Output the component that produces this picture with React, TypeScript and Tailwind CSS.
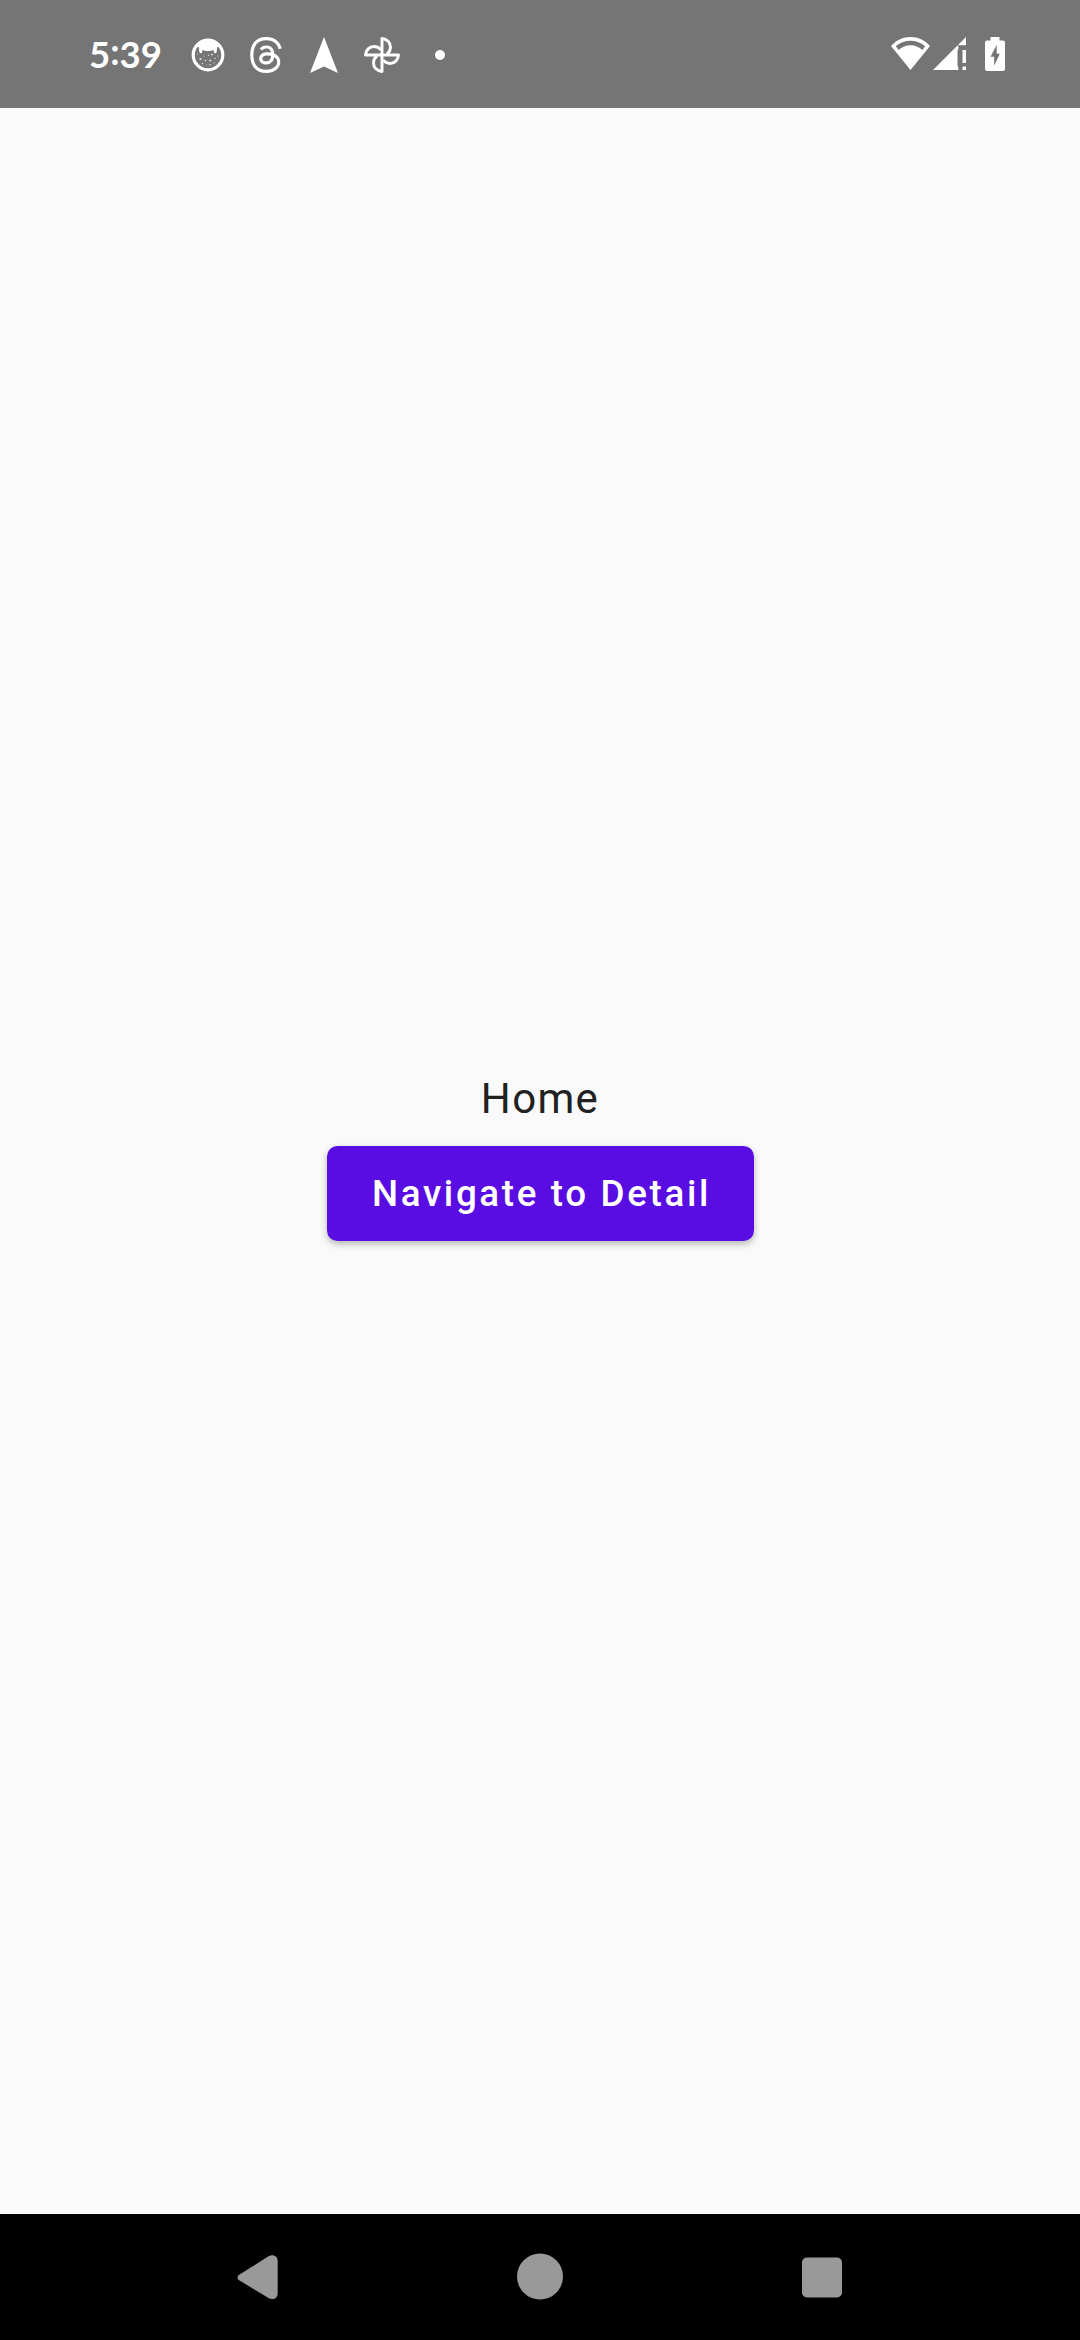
import React from "react";
import { SiThreads } from "react-icons/si";

function CatIcon() {
  return (
    <svg className="h-[36px] w-[36px]" viewBox="0 0 36 36">
      <circle cx="18" cy="18" r="14.800" fill="none" stroke="#fff" strokeWidth="3.200" />
      <path
        fill="#fff"
        d="M6.500 9.500C9 4.500 14 3 18 3s9 1.500 11.500 6.500l-2.700 1c.4 2 .2 4-.9 5.800l-1.600-.3-1-3.200c-1.500 1-3 1.300-5.300 1.300s-3.800-.3-5.300-1.300l-1 3.200-1.600.3c-1.100-1.800-1.300-3.800-.9-5.800z"
      />
      <g fill="#fff" opacity=".8">
        <circle cx="7.500" cy="17" r=".6" />
        <circle cx="10.500" cy="22" r="1.100" />
        <circle cx="14" cy="19" r=".6" />
        <circle cx="18.500" cy="18.300" r=".7" />
        <circle cx="22" cy="17.500" r=".9" />
        <circle cx="15.500" cy="23.500" r=".8" />
        <circle cx="20.300" cy="23.500" r="1.100" />
        <circle cx="25" cy="21.500" r=".7" />
        <circle cx="28" cy="19" r=".6" />
        <circle cx="12.500" cy="26.500" r=".7" />
        <circle cx="16.500" cy="28" r=".5" />
        <circle cx="20" cy="27.800" r=".8" />
        <circle cx="24" cy="25.800" r=".6" />
      </g>
    </svg>
  );
}

function ArrowIcon() {
  return (
    <svg className="h-[36px] w-[28px]" viewBox="0 0 28 36">
      <path fill="#fff" d="M14 0l14 36-14-6.500L0 36z" />
    </svg>
  );
}

function PinwheelIcon() {
  const blade = "M18 18V1.500c5 .3 8.500 4 8.500 8.500 0 3-1.500 5.500-3.500 7";
  return (
    <svg className="h-[36px] w-[36px]" viewBox="0 0 36 36" fill="none" stroke="#fff" strokeWidth="2.900" strokeLinejoin="round">
      {[0, 90, 180, 270].map((angle) => (
        <path key={angle} d={blade} transform={`rotate(${angle} 18 18)`} />
      ))}
    </svg>
  );
}

function WifiIcon() {
  return (
    <svg className="h-[33px] w-[39px]" viewBox="0 0 39 33">
      <path
        fill="#fff"
        fillRule="evenodd"
        d="M19.500 33L0 9C5.500 3 12 0 19.500 0S33.500 3 39 9zM7.500 13C11 10 15 8.200 19.500 8.200S28 10 31.500 13l2.600-3.700C30 5.700 25 3.800 19.500 3.800S9 5.700 4.900 9.300z"
      />
    </svg>
  );
}

function SignalIcon() {
  return (
    <svg className="h-[33px] w-[33px]" viewBox="0 0 33 33" fill="#fff">
      <path d="M33 0v8.300h-8.500V33H0z" />
      <path d="M24 29.500h1.300V33H24zM24 9h1.300v4H24zM29.500 13H33v13h-3.500zM29.500 29.500H33V33h-3.500z" />
    </svg>
  );
}

function BatteryIcon() {
  return (
    <svg className="h-[34px] w-[20px]" viewBox="0 0 20 34">
      <path
        fill="#fff"
        fillRule="evenodd"
        d="M5.500 0h9v3.400H18a2 2 0 0 1 2 2V32a2 2 0 0 1-2 2H2a2 2 0 0 1-2-2V5.400a2 2 0 0 1 2-2h3.500zM11.700 7.700L5.600 19.700h3.600v9.100l5.600-12h-3.100z"
      />
    </svg>
  );
}

function StatusBar() {
  return (
    <header className="flex h-[108px] shrink-0 items-start justify-between bg-[#757575] pr-[75px] pl-[89px]">
      <div className="flex h-[110px] items-center">
        <span className="w-[101px] pb-[2px] font-['Lato',sans-serif] text-[36.500px] leading-[40px] font-bold whitespace-nowrap text-white">
          5<span className="relative -top-[3.500px]">:</span>39
        </span>
        <CatIcon />
        <SiThreads className="ml-[22px] h-[36px] w-[36px] text-white" />
        <span className="w-[26px]" />
        <ArrowIcon />
        <span className="w-[26px]" />
        <PinwheelIcon />
        <span className="ml-[35px] h-[10px] w-[10px] rounded-full bg-white" />
      </div>
      <div className="flex pt-[37px]">
        <WifiIcon />
        <span className="w-[3px]" />
        <SignalIcon />
        <span className="w-[19px]" />
        <BatteryIcon />
      </div>
    </header>
  );
}

function NavigationBar() {
  return (
    <nav className="flex h-[126px] shrink-0 items-center bg-black pl-[237px]">
      <svg className="h-[46px] w-[41px]" viewBox="0 0 41 46">
        <path
          fill="#999"
          d="M2.200 20.700L31.500 2.300C36 -.2 40.700 2.200 40.700 7V39.400C40.700 44.200 36 46.600 31.500 44.100L2.200 26.300C0 24.900 0 22.100 2.200 20.700z"
        />
      </svg>
      <span className="ml-[238.500px] h-[46px] w-[46px] -translate-y-[0.500px] rounded-full bg-[#999]" />
      <span className="ml-[239px] h-[40px] w-[40px] translate-y-[0.500px] rounded-[5px] bg-[#999]" />
    </nav>
  );
}

export default function App() {
  return (
    <div className="flex h-[2340px] w-[1080px] flex-col overflow-hidden bg-[#fafafa] font-['Roboto',sans-serif]">
      <StatusBar />
      <main className="flex flex-1 flex-col items-center pt-[959px]">
        <h1 className="text-[42px] leading-[63px] font-normal tracking-[1.3125px] text-[#212121]">Home</h1>
        <button className="mt-[16px] h-[95px] w-[427px] rounded-[10.500px] bg-[#590de2] pl-[3px] text-[36.750px] leading-[42px] font-medium tracking-[2.650px] text-white shadow-[0_3px_7px_rgba(0,0,0,0.28)]">
          Navigate to Detail
        </button>
      </main>
      <NavigationBar />
    </div>
  );
}
